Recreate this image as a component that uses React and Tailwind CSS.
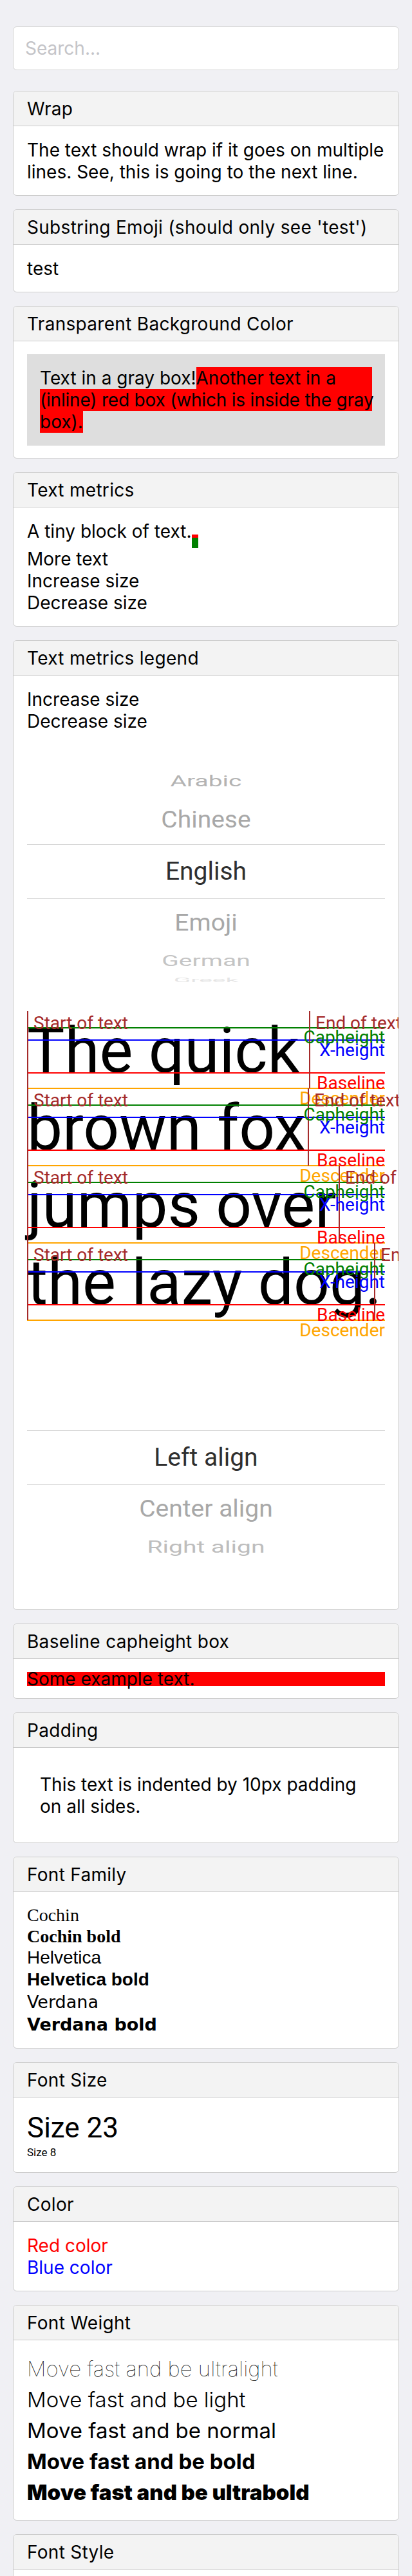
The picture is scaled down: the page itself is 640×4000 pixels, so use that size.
import React from "react";

const metricRows = [
  { text: "The quick", line: "left-[438px]", label: "left-[448px]" },
  { text: "brown fox", line: "left-[436px]", label: "left-[446px]" },
  { text: "jumps over", line: "left-[484px]", label: "left-[494px]" },
  { text: "the lazy dog.", line: "left-[539px]", label: "left-[549px]" },
];

function Card({ title, children }) {
  return (
    <div className="overflow-hidden rounded-[6px] border border-[#cbcbcb] bg-white">
      <div className="border-b border-[#cbcbcb] bg-[#f3f3f3] px-[21px] py-[9.5px] text-[28px] leading-[34px] tracking-[0.3px] text-black">
        {title}
      </div>
      <div className="px-[21px] py-[19.5px] text-[28px] leading-[34px] text-black">{children}</div>
    </div>
  );
}

function PickerRow({ label, className, textClass }) {
  return (
    <div className={`flex items-center justify-center ${className}`}>
      <span className={`font-['Roboto',sans-serif] text-[39px] leading-none ${textClass}`}>{label}</span>
    </div>
  );
}

function MetricRow({ text, line, label }) {
  return (
    <div className="relative h-[120px] font-['Roboto',sans-serif]">
      <div className="whitespace-nowrap text-[98px] leading-[124px] text-black">{text}</div>
      <div className="absolute left-0 right-0 top-[25px] h-[2px] bg-[#008000]" />
      <div className="absolute left-0 right-0 top-[44px] h-[2px] bg-[#0000ff]" />
      <div className="absolute left-0 right-0 top-[95px] h-[2px] bg-[#ff0000]" />
      <div className="absolute left-0 right-0 top-[119px] h-[2px] bg-[#ffa500]" />
      <div className="absolute left-0 top-0 h-[120px] w-[2px] bg-[#a52a2a]" />
      <div className={`absolute top-0 h-[120px] w-[2px] bg-[#a52a2a] ${line}`} />
      <span className="absolute left-[10px] top-[5px] whitespace-nowrap text-[28px] leading-none text-[#a52a2a]">
        Start of text
      </span>
      <span className={`absolute top-[5px] whitespace-nowrap text-[28px] leading-none text-[#a52a2a] ${label}`}>
        End of text
      </span>
      <span className="absolute right-0 top-[27px] text-[28px] leading-none text-[#008000]">Capheight</span>
      <span className="absolute right-0 top-[47px] text-[28px] leading-none text-[#0000ff]">X-height</span>
      <span className="absolute right-0 top-[98px] text-[28px] leading-none text-[#ff0000]">Baseline</span>
      <span className="absolute right-0 top-[122px] text-[28px] leading-none text-[#ffa500]">Descender</span>
    </div>
  );
}

export default function App() {
  return (
    <div className="min-h-screen w-full bg-[#f0f0f4] px-[20px] pt-[41px] pb-10 font-['Inter',sans-serif]">
      <input
        placeholder="Search..."
        className="block h-[68px] w-full rounded-[6px] border border-[#d4d4d4] bg-white px-[18px] text-[28px] text-black outline-none placeholder:text-[#c4c4c8]"
      />

      <div className="mt-[32px] flex flex-col gap-[21px]">
        <Card title="Wrap">
          The text should wrap if it goes on multiple lines. See, this is going to the next line.
        </Card>

        <Card title="Substring Emoji (should only see 'test')">test</Card>

        <Card title="Transparent Background Color">
          <div className="bg-[#dedede] p-[20px]">
            <div className="flex">
              <span className="whitespace-nowrap">Text in a gray box!</span>
              <span className="flex-1 whitespace-nowrap bg-[#ff0000]">Another text in a</span>
            </div>
            <div className="whitespace-nowrap bg-[#ff0000] tracking-[-0.2px]">
              (inline) red box (which is inside the gray
            </div>
            <div>
              <span className="bg-[#ff0000]">box).</span>
            </div>
          </div>
        </Card>

        <Card title="Text metrics">
          <div>
            A tiny block of text.
            <span className="inline-flex h-[21px] w-[10px] flex-col align-baseline">
              <span className="h-[5px] bg-[#ff0000]" />
              <span className="h-[16px] bg-[#008000]" />
            </span>
          </div>
          <div>More text</div>
          <div>Increase size</div>
          <div>Decrease size</div>
        </Card>

        <Card title="Text metrics legend">
          <div>Increase size</div>
          <div>Decrease size</div>

          {/* language picker */}
          <div className="pt-[55px] pb-[39px]">
            <PickerRow label="Arabic" className="h-[44px]" textClass="scale-y-[0.62] text-[#b3b3b3]" />
            <PickerRow label="Chinese" className="h-[75px]" textClass="scale-y-[0.93] text-[#a8a8a8]" />
            <PickerRow
              label="English"
              className="h-[85px] border-y border-[#d0d0d0]"
              textClass="text-[#2f2f2f]"
            />
            <PickerRow label="Emoji" className="h-[75px]" textClass="scale-y-[0.93] text-[#a8a8a8]" />
            <PickerRow label="German" className="h-[44px]" textClass="scale-y-[0.6] text-[#c4c4c4]" />
            <PickerRow label="Greek" className="h-[16px]" textClass="scale-y-[0.22] text-[#e4e4e4]" />
          </div>

          <div>
            {metricRows.map((row) => (
              <MetricRow key={row.text} {...row} />
            ))}
          </div>

          {/* alignment picker */}
          <div className="pt-[171px] pb-[55px]">
            <PickerRow
              label="Left align"
              className="h-[85px] border-y border-[#d0d0d0]"
              textClass="text-[#2f2f2f]"
            />
            <PickerRow label="Center align" className="h-[75px]" textClass="scale-y-[0.93] text-[#a8a8a8]" />
            <PickerRow label="Right align" className="h-[44px]" textClass="scale-y-[0.64] text-[#bdbdbd]" />
          </div>
        </Card>

        <Card title="Baseline capheight box">
          <div className="h-[22px] bg-[#ff0000] leading-[22px]">Some example text.</div>
        </Card>

        <Card title="Padding">
          <div className="p-[20px]">This text is indented by 10px padding on all sides.</div>
        </Card>

        <Card title="Font Family">
          <div className="font-['Liberation_Serif',serif] leading-[32px]">Cochin</div>
          <div className="font-['Liberation_Serif',serif] font-bold leading-[33px]">Cochin bold</div>
          <div className="font-['Liberation_Sans',sans-serif] leading-[34px]">Helvetica</div>
          <div className="font-['Liberation_Sans',sans-serif] font-bold leading-[34px]">Helvetica bold</div>
          <div className="font-['DejaVu_Sans',sans-serif] text-[27px] leading-[35px]">Verdana</div>
          <div className="font-['DejaVu_Sans',sans-serif] text-[27px] font-bold leading-[35px]">Verdana bold</div>
        </Card>

        <Card title="Font Size">
          <div className="font-['Roboto',sans-serif] text-[44px] leading-[54px]">Size 23</div>
          <div className="font-['Roboto',sans-serif] text-[17px] leading-[23px]">Size 8</div>
        </Card>

        <Card title="Color">
          <div className="text-[#ff0000]">Red color</div>
          <div className="text-[#0000ff]">Blue color</div>
        </Card>

        <Card title="Font Weight">
          <div className="text-[33px] leading-[48px]">
            <div className="font-thin">Move fast and be ultralight</div>
            <div className="font-light">Move fast and be light</div>
            <div className="font-normal">Move fast and be normal</div>
            <div className="font-bold">Move fast and be bold</div>
            <div className="font-black">Move fast and be ultrabold</div>
          </div>
        </Card>

        <Card title="Font Style">
          <div>Normal text</div>
          <div className="italic">Italic text</div>
        </Card>
      </div>
    </div>
  );
}
